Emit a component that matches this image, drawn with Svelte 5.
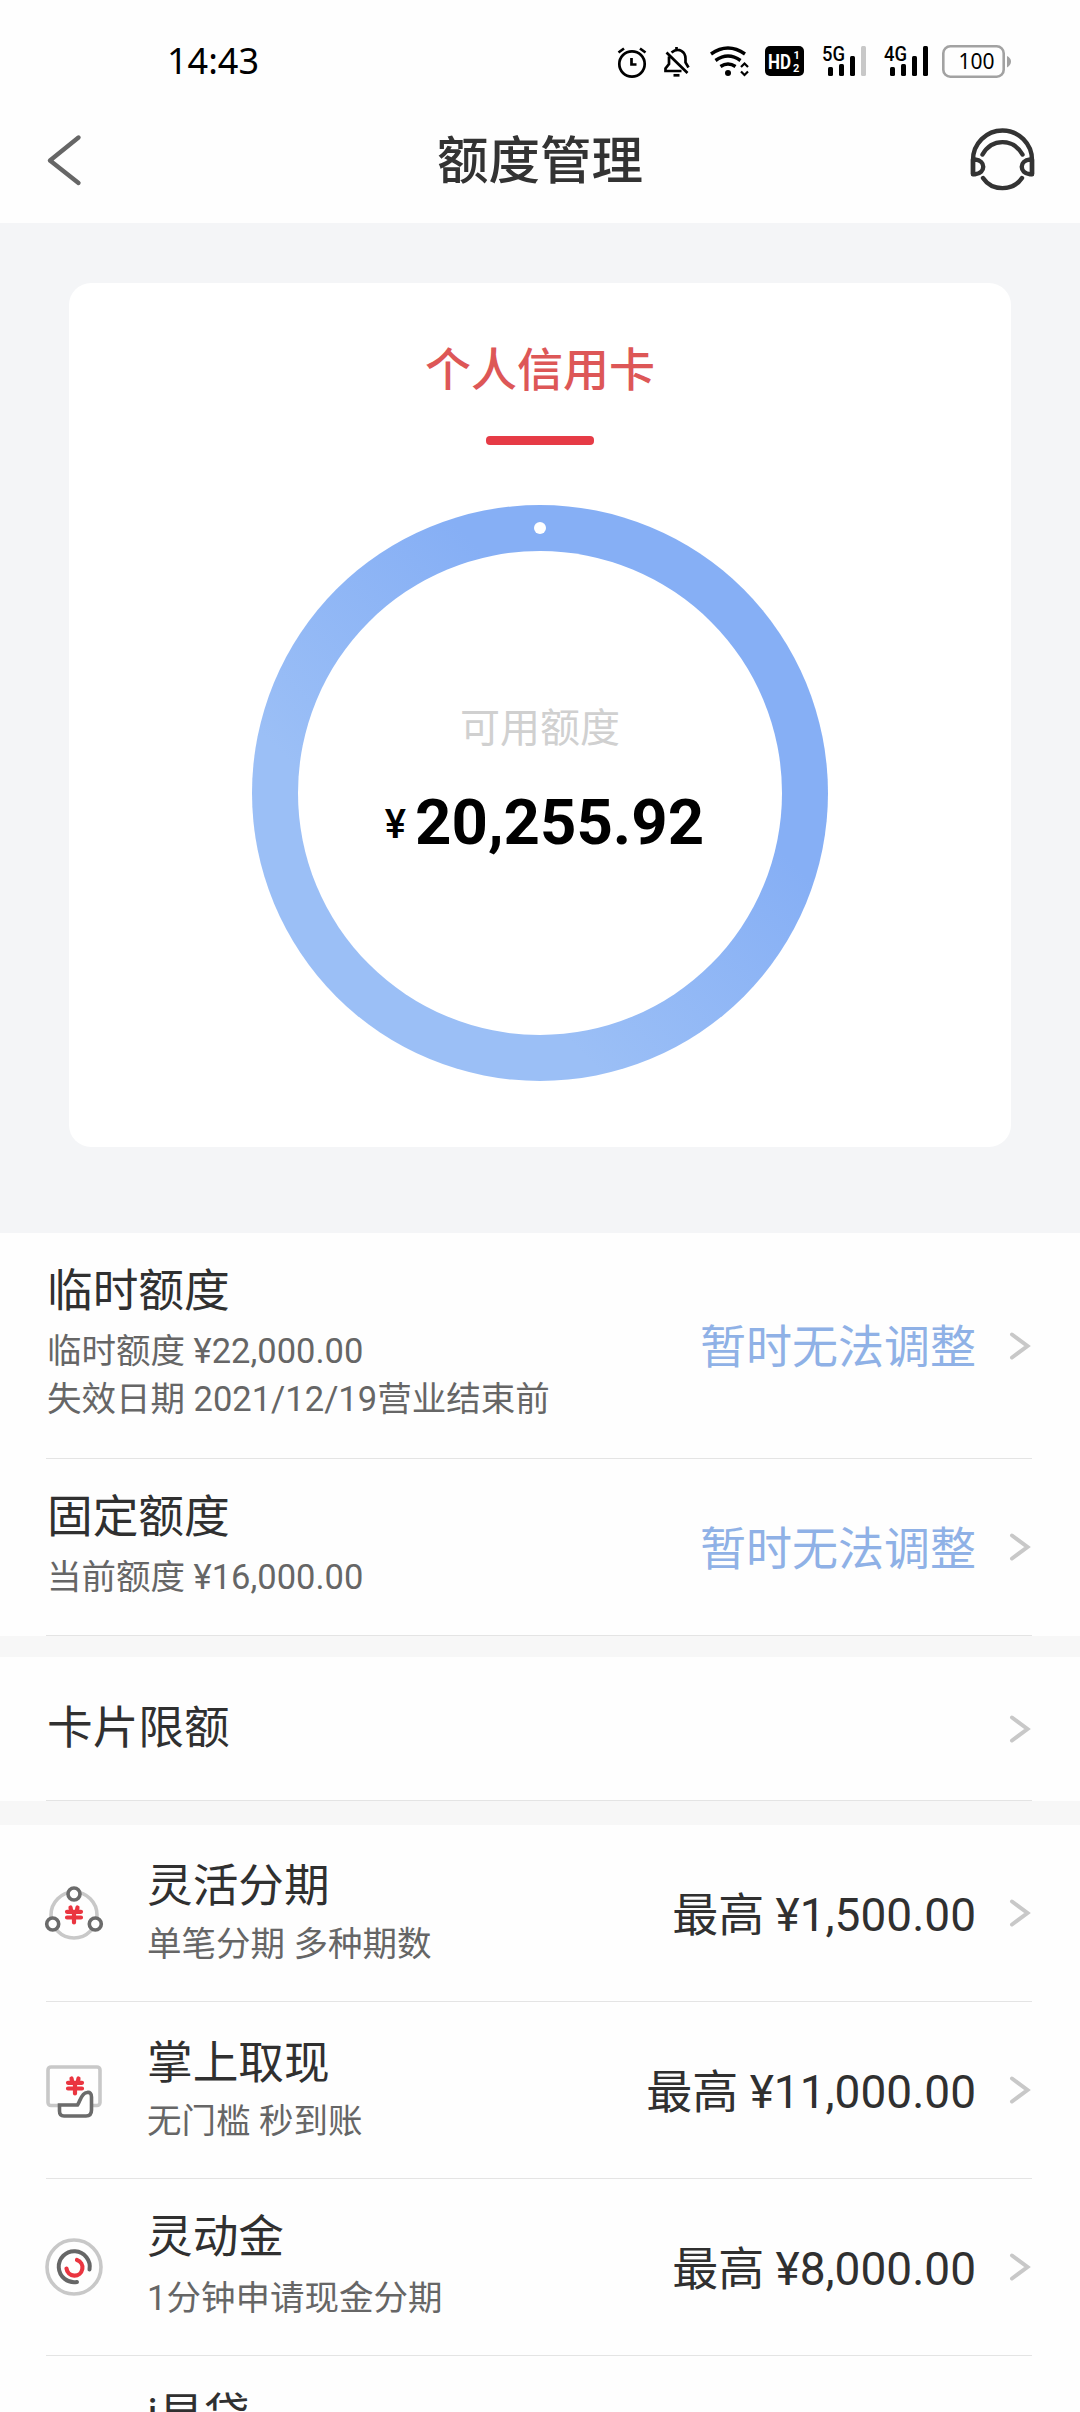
<script lang="ts">
  type Limit = {
    title: string;
    lines: string[];
    tall: boolean;
  };

  type Product = {
    icon: "instalment" | "cash" | "flex" | "loan";
    title: string;
    desc: string;
    max: string;
  };

  const limits: Limit[] = [
    {
      title: "临时额度",
      lines: ["临时额度 ¥22,000.00", "失效日期 2021/12/19营业结束前"],
      tall: true
    },
    { title: "固定额度", lines: ["当前额度 ¥16,000.00"], tall: false }
  ];

  const products: Product[] = [
    { icon: "instalment", title: "灵活分期", desc: "单笔分期 多种期数", max: "¥1,500.00" },
    { icon: "cash", title: "掌上取现", desc: "无门槛 秒到账", max: "¥11,000.00" },
    { icon: "flex", title: "灵动金", desc: "1分钟申请现金分期", max: "¥8,000.00" },
    { icon: "loan", title: "i易贷", desc: "", max: "" }
  ];
</script>

{#snippet chevron()}
  <svg class="chevron" viewBox="0 0 24 32" width="24" height="32">
    <path d="M4 4.500L19.500 16L4 27.500" />
  </svg>
{/snippet}

{#snippet yuan(x: number, y: number)}
  <g class="yuan" transform="translate({x} {y})">
    <path d="M-3.500 -7.500L-2.800 -4M3.500 -7.500L2.800 -4M-7 -3.200H7M-7 2.500H7M0 -3V7.500" />
  </g>
{/snippet}

<main class="page">
  <div class="status">
    <span class="time">14:43</span>
    <div class="tray">
      <svg viewBox="616 40 32 42" width="32" height="42">
        <g class="line">
          <circle cx="632" cy="64" r="12.700" />
          <path d="M631.500 58V64.500H636.500M618.500 52.500L624 48.500M645.500 52.500L640 48.500" />
        </g>
      </svg>
      <svg viewBox="660 40 34 42" width="34" height="42">
        <g class="line">
          <path d="M671.500 52.500C679 46.500 685.500 52 685.500 58.500V62.500L688.500 67.500M676.500 47V50M669 56.500V64L665.500 68.500V71H681.500M666.500 52.500L687.500 73" />
          <path d="M673.500 75.300H679.500" />
        </g>
      </svg>
      <svg viewBox="706 40 46 42" width="46" height="42">
        <g class="line wifi">
          <path d="M711 54Q728 42 745 54M715.500 60.500Q728 51.500 740.500 60.500M720.500 66.500Q728 61.500 735.500 66.500" />
        </g>
        <circle cx="728" cy="73" r="3" />
        <path class="line thin" d="M741 67L744.500 63.500L748 67M741 71.500L744.500 75L748 71.500" />
      </svg>
      <svg viewBox="764 40 41 42" width="41" height="42">
        <rect x="765" y="46" width="39" height="30" rx="5" />
        <text class="hd" x="768" y="69" textLength="23" lengthAdjust="spacingAndGlyphs">HD</text>
        <text class="sim" x="793.500" y="58.500">1</text>
        <text class="sim" x="793" y="71.500">2</text>
      </svg>
      <svg viewBox="817 40 52 42" width="52" height="42">
        <text class="net" x="822" y="61" textLength="23" lengthAdjust="spacingAndGlyphs">5G</text>
        <rect x="828" y="67" width="5" height="9" rx="1.500" />
        <rect x="839" y="64" width="5" height="12" rx="1.500" />
        <rect x="850" y="56" width="5" height="20" rx="1.500" />
        <rect class="off" x="861" y="46" width="5" height="30" rx="1.500" />
      </svg>
      <svg viewBox="881 40 49 42" width="49" height="42">
        <text class="net" x="884" y="61" textLength="23" lengthAdjust="spacingAndGlyphs">4G</text>
        <rect x="890" y="67" width="5" height="9" rx="1.500" />
        <rect x="901" y="64" width="5" height="12" rx="1.500" />
        <rect x="912" y="56" width="5" height="20" rx="1.500" />
        <rect x="923" y="46" width="5" height="30" rx="1.500" />
      </svg>
      <svg viewBox="942 40 70 42" width="70" height="42">
        <rect class="battery" x="943.300" y="46.300" width="60.400" height="30.400" rx="7" />
        <path class="nub" d="M1007 56Q1011 58 1011 61.500Q1011 65 1007 67.500Z" />
        <text class="charge" x="958.500" y="69">100</text>
      </svg>
    </div>
  </div>

  <header class="header">
    <svg viewBox="0 0 40 56" width="40" height="56">
      <path class="back" d="M34.500 5.500L6 28.500L34.500 51" />
    </svg>
    <h1>额度管理</h1>
    <svg class="service" viewBox="970 126 66 68" width="66" height="68">
      <g class="headset">
        <path d="M973 174V160A29.500 29.500 0 0 1 1032 160V174" />
        <path d="M973 159.500H975C986 160.500 986 173 975 174.300H973ZM1032 159.500H1030C1019 160.500 1019 173 1030 174.300H1032Z" />
        <path d="M982.500 154.500C992 138 1013 138 1022.500 154.500M983 178C992 191.500 1013 191.500 1022 178" />
      </g>
    </svg>
  </header>

  <section class="hero">
    <div class="card">
      <h2>个人信用卡</h2>
      <i class="bar"></i>
      <div class="ring">
        <i class="dot"></i>
        <div class="inner">
          <span class="label">可用额度</span>
          <p class="amount"><small>¥</small>20,255.92</p>
        </div>
      </div>
    </div>
  </section>

  <section class="group limits">
    {#each limits as limit (limit.title)}
      <div class="row" class:tall={limit.tall}>
        <div class="text">
          <h3>{limit.title}</h3>
          {#each limit.lines as line}
            <p>{line}</p>
          {/each}
        </div>
        <span class="value locked">暂时无法调整</span>
        {@render chevron()}
      </div>
    {/each}
  </section>

  <section class="group quota">
    <div class="row single">
      <div class="text"><h3>卡片限额</h3></div>
      {@render chevron()}
    </div>
  </section>

  <section class="group products">
    {#each products as item (item.title)}
      <div class="row {item.icon}">
        <svg class="icon" viewBox="0 0 60 60" width="60" height="60">
          {#if item.icon === "instalment"}
            <circle class="soft" cx="30" cy="32" r="23" />
            <circle class="node" cx="30" cy="11" r="6" />
            <circle class="node" cx="8.700" cy="41" r="6" />
            <circle class="node" cx="51.300" cy="41" r="6" />
            {@render yuan(30, 32)}
          {:else if item.icon === "cash"}
            <rect class="soft" x="4" y="7" width="52" height="38.500" rx="3" />
            {@render yuan(31, 26)}
            <path class="node" d="M15.500 45H33.500C36 42 37 33 43 32.500C46 32 47.500 33.500 47.500 37V50C47.500 54 46 56 42 56H20C17 56 15.500 54 15.500 51Z" />
          {:else if item.icon === "flex"}
            <circle class="soft" cx="30" cy="30" r="27" />
            <path class="dark" d="M33 45A15.500 15.500 0 1 1 45.500 32.500" />
            <path class="red" d="M33 23A8 8 0 1 1 22.500 31.500" />
          {/if}
        </svg>
        <div class="text">
          <h3>{item.title}</h3>
          {#if item.desc}<p>{item.desc}</p>{/if}
        </div>
        {#if item.max}
          <span class="value">最高 {item.max}</span>
          {@render chevron()}
        {/if}
      </div>
    {/each}
  </section>
</main>

<style>
  :global(body) {
    margin: 0;
    background: #fff;
    font-family: Roboto, "Noto Sans CJK SC", sans-serif;
    color: #303030;
  }

  h1, h2, h3, p {
    margin: 0;
    font-weight: 400;
  }

  svg {
    display: block;
    flex: none;
  }

  .page {
    width: 1080px;
    height: 2412px;
    overflow: hidden;
    background: #fefefe;
  }

  .status {
    display: flex;
    justify-content: space-between;
    align-items: center;
    height: 122px;
    box-sizing: border-box;
    padding: 0 68px 0 167px;
  }

  .time {
    font-family: "Noto Sans", sans-serif;
    font-size: 36px;
    line-height: 42px;
    color: #000;
  }

  .tray {
    display: flex;
    gap: 12px;
  }

  .line {
    fill: none;
    stroke: #000;
    stroke-width: 2.7;
  }

  .wifi {
    stroke-width: 3.4;
  }

  .thin {
    stroke-width: 2.2;
  }

  .hd {
    font: 700 20px Roboto, sans-serif;
    fill: #fff;
  }

  .sim {
    font: 700 11px Roboto, sans-serif;
    fill: #fff;
  }

  .net {
    font: 500 20px Roboto, sans-serif;
  }

  .off {
    fill: #c8c8c8;
  }

  .battery {
    fill: none;
    stroke: #a2a2a2;
    stroke-width: 2.6;
  }

  .nub {
    fill: #a2a2a2;
  }

  .charge {
    font: 400 21px "Noto Sans", sans-serif;
  }

  .header {
    display: grid;
    grid-template-columns: 1fr auto 1fr;
    align-items: center;
    height: 101px;
    box-sizing: border-box;
    padding: 0 44px 25px;
  }

  .header h1 {
    padding-top: 3px;
    font-size: 51.5px;
    font-weight: 500;
    line-height: 60px;
    color: #333;
  }

  .service {
    justify-self: end;
  }

  .back, .headset {
    fill: none;
    stroke: #333;
    stroke-width: 4.4;
    stroke-linecap: round;
    stroke-linejoin: round;
  }

  .back {
    stroke: #666;
  }

  .hero {
    height: 1010px;
    box-sizing: border-box;
    padding: 60px 69px 0;
    background: #f4f5f7;
  }

  .card {
    display: flex;
    flex-direction: column;
    align-items: center;
    height: 864px;
    box-sizing: border-box;
    padding-top: 57px;
    border-radius: 22px;
    background: #fff;
  }

  .card h2 {
    font-size: 46px;
    font-weight: 500;
    line-height: 60px;
    color: #dd5757;
  }

  .bar {
    width: 108px;
    height: 9px;
    margin: 36px 0 60px;
    border-radius: 4px;
    background: #e63b46;
  }

  .ring {
    position: relative;
    width: 576px;
    height: 576px;
    box-sizing: border-box;
    padding: 46px;
    border-radius: 50%;
    background: linear-gradient(225deg, #86aff5 34%, #9bbff6 69%);
  }

  .dot {
    position: absolute;
    top: 17px;
    left: 282px;
    width: 12px;
    height: 12px;
    border-radius: 50%;
    background: #fff;
  }

  .inner {
    display: flex;
    flex-direction: column;
    align-items: center;
    height: 100%;
    box-sizing: border-box;
    padding-top: 153px;
    border-radius: 50%;
    background: #fff;
  }

  .label {
    font-size: 40px;
    line-height: 50px;
    color: #d0d0d0;
  }

  .amount {
    display: flex;
    align-items: baseline;
    gap: 9px;
    margin-top: 33px;
    padding-left: 9px;
    font-size: 63.5px;
    font-weight: 700;
    line-height: 72px;
    color: #000;
  }

  .amount small {
    position: relative;
    top: -6px;
    font-size: 40px;
    font-weight: 500;
  }

  .group {
    padding: 0 48px 0 46px;
  }

  .quota {
    border-top: 21px solid #f7f7f7;
  }

  .products {
    border-top: 24px solid #f7f7f7;
  }

  .row {
    display: flex;
    align-items: center;
    height: 177px;
    box-sizing: border-box;
    border-bottom: 1px solid #e4e4e4;
  }

  .row.tall {
    height: 226px;
  }

  .row.single {
    height: 144px;
  }

  .text {
    flex: 1;
    padding-left: 1px;
  }

  h3 {
    font-size: 45.7px;
    line-height: 60px;
  }

  .text p {
    font-size: 34.5px;
    line-height: 48px;
    color: #666;
  }

  .limits h3 {
    margin: -6px 0 5px;
  }

  .products h3 {
    margin: -1px 0 3px;
  }

  .products .flex h3 {
    margin: -5px 0 6px;
  }

  .value {
    padding-top: 3px;
    font-size: 46px;
    line-height: 60px;
  }

  .locked {
    color: #8fb1e6;
  }

  .chevron {
    margin-left: 32px;
  }

  .chevron path {
    fill: none;
    stroke: #c8c8c8;
    stroke-width: 4;
    stroke-linecap: round;
  }

  .icon {
    margin: 0 42px 0 -2px;
  }

  .row.loan {
    align-items: flex-start;
    padding-top: 31px;
  }

  .soft, .node, .dark, .red {
    fill: none;
    stroke: #c8c8c8;
    stroke-width: 3.6;
    stroke-linecap: round;
  }

  .node {
    fill: #fff;
    stroke: #6b6b6b;
  }

  .dark {
    stroke: #666;
    stroke-width: 4;
  }

  .red, .yuan {
    fill: none;
    stroke: #ea3540;
    stroke-width: 4.2;
    stroke-linecap: round;
  }
</style>
